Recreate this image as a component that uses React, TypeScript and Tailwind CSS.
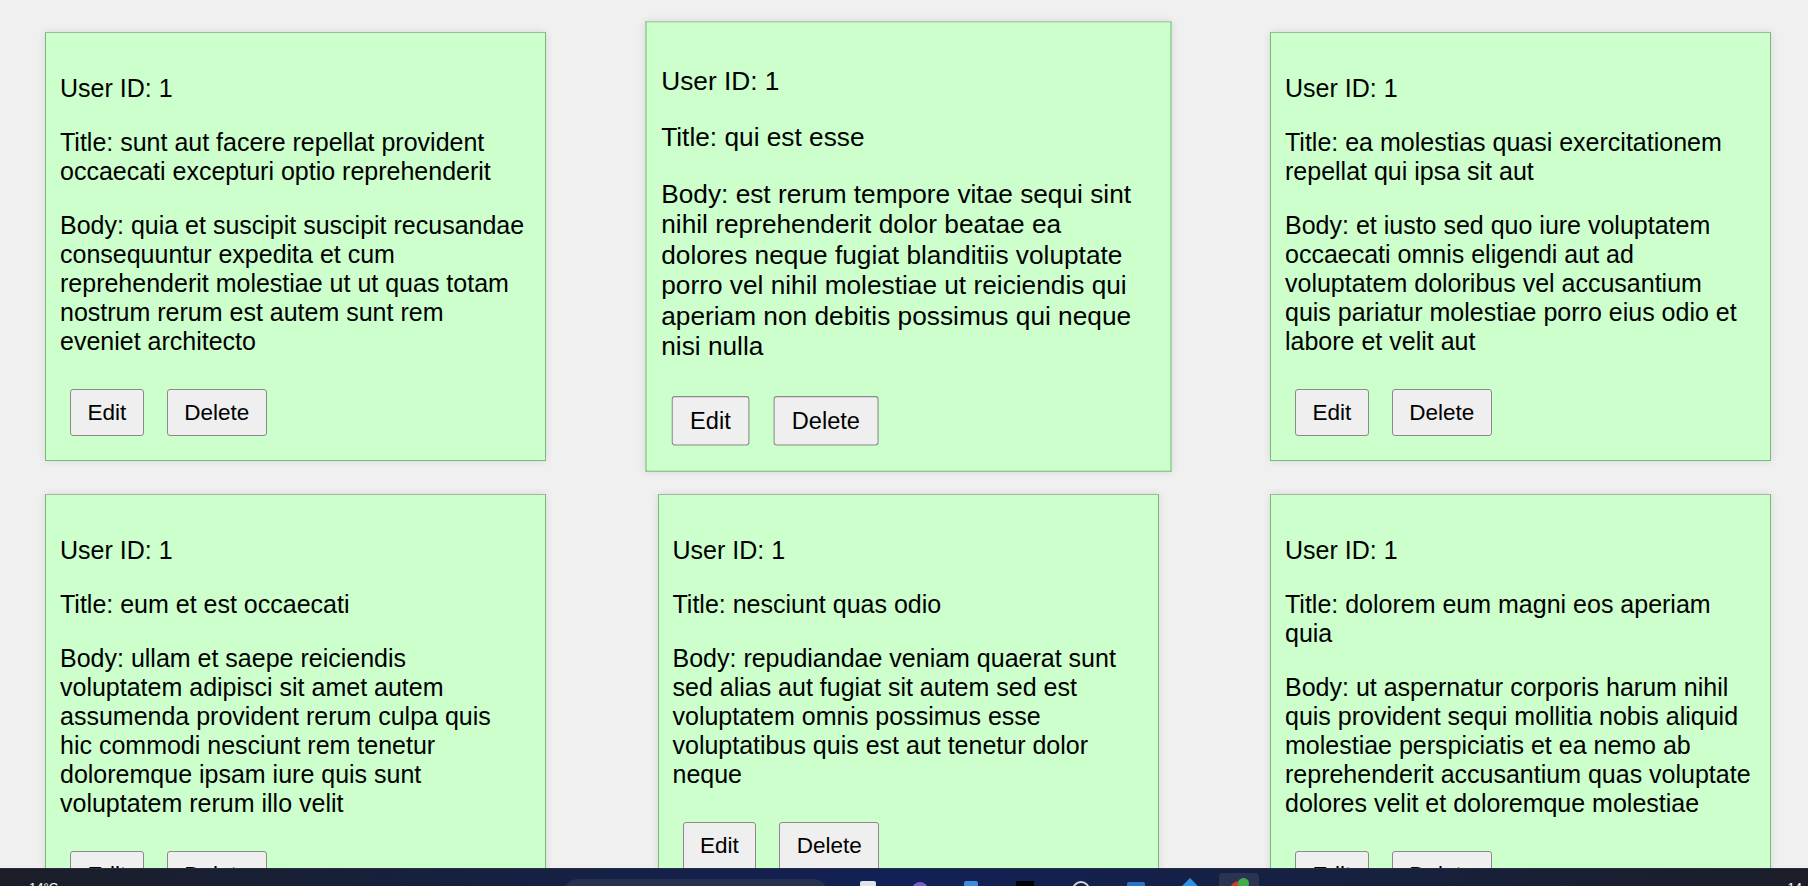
import React from "react"

interface Post {
  id: number
  userId: number
  title: string
  body: string
}

const posts: Post[] = [
  {
    id: 1,
    userId: 1,
    title: "sunt aut facere repellat provident occaecati excepturi optio reprehenderit",
    body: "quia et suscipit suscipit recusandae consequuntur expedita et cum reprehenderit molestiae ut ut quas totam nostrum rerum est autem sunt rem eveniet architecto",
  },
  {
    id: 2,
    userId: 1,
    title: "qui est esse",
    body: "est rerum tempore vitae sequi sint nihil reprehenderit dolor beatae ea dolores neque fugiat blanditiis voluptate porro vel nihil molestiae ut reiciendis qui aperiam non debitis possimus qui neque nisi nulla",
  },
  {
    id: 3,
    userId: 1,
    title: "ea molestias quasi exercitationem repellat qui ipsa sit aut",
    body: "et iusto sed quo iure voluptatem occaecati omnis eligendi aut ad voluptatem doloribus vel accusantium quis pariatur molestiae porro eius odio et labore et velit aut",
  },
  {
    id: 4,
    userId: 1,
    title: "eum et est occaecati",
    body: "ullam et saepe reiciendis voluptatem adipisci sit amet autem assumenda provident rerum culpa quis hic commodi nesciunt rem tenetur doloremque ipsam iure quis sunt voluptatem rerum illo velit",
  },
  {
    id: 5,
    userId: 1,
    title: "nesciunt quas odio",
    body: "repudiandae veniam quaerat sunt sed alias aut fugiat sit autem sed est voluptatem omnis possimus esse voluptatibus quis est aut tenetur dolor neque",
  },
  {
    id: 6,
    userId: 1,
    title: "dolorem eum magni eos aperiam quia",
    body: "ut aspernatur corporis harum nihil quis provident sequi mollitia nobis aliquid molestiae perspiciatis et ea nemo ab reprehenderit accusantium quas voluptate dolores velit et doloremque molestiae",
  },
]

const PostCard: React.FC<{ post: Post; hovered?: boolean }> = ({ post, hovered }) => {
  return (
    <div
      className={`bg-[#ccffcc] border border-[#78b878] border-t-[#a0b8a0] pl-[14px] pr-[18px] pt-[16px] pb-[16px] shadow-[0_0_8px_rgba(0,0,0,0.1)] ${
        hovered ? "scale-[1.05]" : ""
      }`}
    >
      <p className="my-[25px]">User ID: {post.userId}</p>
      <p className="my-[25px]">Title: {post.title}</p>
      <p className="my-[25px]">Body: {post.body}</p>
      <div className="flex gap-[23px] pl-[10px] pt-[8px] pb-[8px]">
        <button className="bg-[#efefef] border border-[#8a8a8a] rounded-[3px] px-[16.5px] py-[9.7px] text-[22.5px] leading-[normal] text-black">
          Edit
        </button>
        <button className="bg-[#efefef] border border-[#8a8a8a] rounded-[3px] px-[16.5px] py-[9.7px] text-[22.5px] leading-[normal] text-black">
          Delete
        </button>
      </div>
    </div>
  )
}

const Taskbar = () => (
  <div className="h-[18px] shrink-0 overflow-hidden bg-gradient-to-r from-[#1b1e27] via-[#132056] to-[#1b1e28] border-t border-[#2a2f3c]">
    <div className="flex items-start h-full">
      <span className="ml-[29px] mt-[12px] text-[13px] leading-none text-white font-['Segoe_UI','Liberation_Sans',sans-serif]">
        14°C
      </span>
      <div className="ml-[505px] mt-[10px] w-[265px] h-[30px] rounded-full bg-[#26304f]" />
      <div className="ml-[32px] mt-[12px] w-[16px] h-[14px] rounded-[2px] bg-[#dfe3ea]" />
      <div className="ml-[36px] mt-[13px] w-[16px] h-[16px] rounded-full bg-[#7b5fc9]" />
      <div className="ml-[36px] mt-[12px] w-[14px] h-[14px] rounded-[2px] bg-[#3b8be0]" />
      <div className="ml-[38px] mt-[12px] w-[18px] h-[14px] bg-[#050505]" />
      <div className="ml-[38px] mt-[12px] w-[18px] h-[18px] rounded-full border-2 border-[#d8d8d8]" />
      <div className="ml-[37px] mt-[13px] w-[18px] h-[14px] rounded-[2px] bg-[#2b73c9]" />
      <div className="ml-[38px] mt-[12px] w-[14px] h-[14px] bg-[#2d8fe6] rotate-45" />
      <div className="ml-[22px] mt-[4px] w-[40px] h-[30px] rounded-[4px] bg-[#2b3350] flex items-start justify-center">
        <div className="relative mt-[8px] w-[18px] h-[18px] rounded-full bg-[#d23a2a]">
          <div className="absolute -top-[3px] left-[8px] w-[11px] h-[11px] rounded-full bg-[#3fae49]" />
        </div>
      </div>
      <span className="ml-auto mr-[6px] mt-[12px] text-[13px] leading-none text-white font-['Segoe_UI','Liberation_Sans',sans-serif]">
        14
      </span>
    </div>
  </div>
)

const App: React.FC = () => {
  return (
    <div className="w-full h-[886px] flex flex-col bg-[#f0f0f0] overflow-hidden font-['Liberation_Sans',Arial,sans-serif] text-[25px] leading-[normal] text-black">
      <div className="flex-1 overflow-hidden">
        <div className="grid grid-cols-[repeat(3,501px)] gap-x-[111.5px] gap-y-[33px] pl-[45px] pt-[32px]">
          {posts.map((post, i) => (
            <PostCard key={post.id} post={post} hovered={i === 1} />
          ))}
        </div>
      </div>
      <Taskbar />
    </div>
  )
}

export default App
